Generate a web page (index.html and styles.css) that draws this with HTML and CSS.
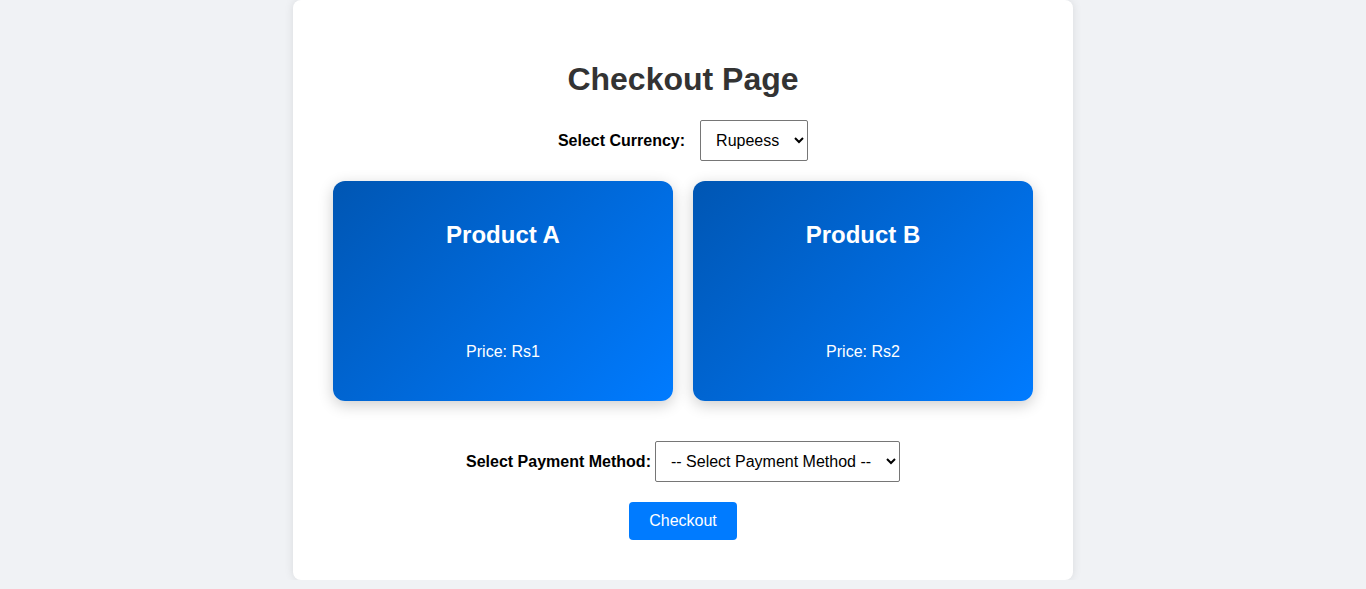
FILE: index.html
```html
<!DOCTYPE html>
<html lang="en">
<head>
<meta charset="UTF-8">
<title>Checkout Page</title>
<link rel="stylesheet" href="styles.css">
</head>
<body>
<div class="container">
  <h1 class="title">Checkout Page</h1>
  <div class="currency-row">
    <label class="currency-label" for="currency">Select Currency:</label>
    <select id="currency" class="select">
      <option>Rupeess</option>
      <option>Dollars</option>
    </select>
  </div>
  <div class="products">
    <div class="card">
      <h2 class="card-title">Product A</h2>
      <p class="card-price">Price: Rs1</p>
    </div>
    <div class="card">
      <h2 class="card-title">Product B</h2>
      <p class="card-price">Price: Rs2</p>
    </div>
  </div>
  <div class="payment-row">
    <label class="payment-label" for="payment">Select Payment Method:</label>
    <select id="payment" class="select">
      <option>-- Select Payment Method --</option>
      <option>Credit Card</option>
    </select>
  </div>
  <div class="actions">
    <button class="btn">Checkout</button>
  </div>
</div>
</body>
</html>
```

FILE: styles.css
```css
html, body {
  margin: 0;
  padding: 0;
}
body {
  background: #f0f2f5;
  font-family: "Liberation Sans", Arial, sans-serif;
  color: #000;
}
.container {
  width: 700px;
  margin: 0 auto;
  padding: 40px;
  background: #fff;
  border-radius: 8px;
  box-shadow: 0 0 10px rgba(0, 0, 0, 0.1);
}
.title {
  font-size: 32px;
  color: #333;
  text-align: center;
  margin: 21px 0 22px;
  line-height: 37px;
}
.currency-row,
.payment-row {
  display: flex;
  justify-content: center;
  align-items: center;
}
.currency-label {
  font-weight: bold;
  font-size: 16px;
  margin-right: 15px;
}
.payment-label {
  font-weight: bold;
  font-size: 16px;
  margin-right: 4px;
}
.select {
  font-family: "Liberation Sans", Arial, sans-serif;
  font-size: 16px;
  padding: 10px 11px;
  height: 41px;
  border: 1px solid #767676;
  border-radius: 2px;
  background: #fff;
  color: #000;
}
.products {
  display: flex;
  gap: 20px;
  margin: 20px 0 40px;
}
.card {
  flex: 1;
  height: 220px;
  box-sizing: border-box;
  padding: 20px;
  border-radius: 12px;
  background: linear-gradient(135deg, #0056b3, #007bff);
  color: #fff;
  box-shadow: 0 4px 15px rgba(0, 0, 0, 0.2);
  display: flex;
  flex-direction: column;
  align-items: center;
}
.card-title {
  font-size: 24px;
  margin: 20px 0 0;
  line-height: 28px;
}
.card-price {
  font-size: 16px;
  margin: auto 0 20px;
  line-height: 18px;
}
.actions {
  display: flex;
  justify-content: center;
  margin-top: 20px;
}
.btn {
  font-family: "Liberation Sans", Arial, sans-serif;
  font-size: 16px;
  color: #fff;
  background: #007bff;
  border: none;
  border-radius: 4px;
  padding: 10px 20px;
  height: 38px;
  cursor: pointer;
}
```
